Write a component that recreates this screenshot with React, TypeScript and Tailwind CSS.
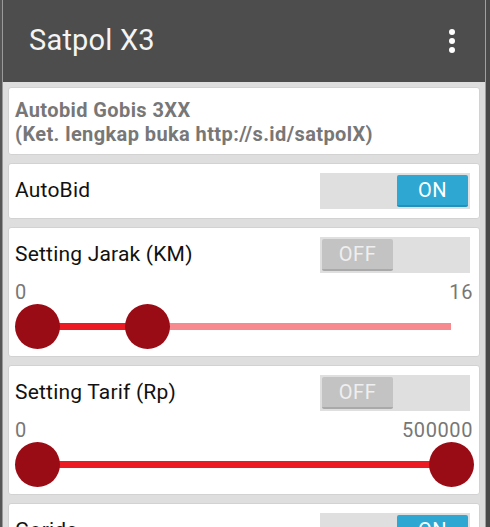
import React from 'react';

type ToggleProps = { on: boolean };

const Toggle: React.FC<ToggleProps> = ({ on }) => (
  <div className={`w-[150px] h-[36px] bg-[#dfdfdf] p-[2px] flex shrink-0 ${on ? 'justify-end' : 'justify-start'}`}>
    {on ? (
      <div className="w-[71px] h-[32px] bg-[#2ea7d3] border-b-[2px] border-[#2591bb] rounded-[2px] flex items-center justify-center text-white text-[20px] tracking-[0.5px] leading-none">
        ON
      </div>
    ) : (
      <div className="w-[71px] h-[32px] bg-[#c3c3c3] border-b-[2px] border-[#a9a9a9] rounded-[2px] flex items-center justify-center text-[#efefef] text-[20px] tracking-[0.5px] leading-none">
        OFF
      </div>
    )}
  </div>
);

type RangeProps = { min: number; max: number; low: number; high: number };

// Two thumb range slider, thumbs sit over the track
const RangeSlider: React.FC<RangeProps> = ({ min, max, low, high }) => {
  const lo = (low - min) / (max - min);
  const hi = (high - min) / (max - min);
  return (
    <div className="relative h-[45px] mt-[1px]">
      <div className="absolute left-[22px] right-[22px] top-[19px] h-[7px]">
        <div className="absolute inset-0 bg-[#f68a8f]" />
        <div
          className="absolute top-0 bottom-0 bg-[#ec1a23]"
          style={{ left: `${lo * 100}%`, right: `${(1 - hi) * 100}%` }}
        />
        <div
          className="absolute top-[-19px] w-[45px] h-[45px] -ml-[22px] rounded-full bg-[#9a0c15]"
          style={{ left: `${lo * 100}%` }}
        />
        <div
          className="absolute top-[-19px] w-[45px] h-[45px] -ml-[22px] rounded-full bg-[#9a0c15]"
          style={{ left: `${hi * 100}%` }}
        />
      </div>
    </div>
  );
};

type SliderCardProps = {
  title: string;
  on: boolean;
  min: number;
  max: number;
  low: number;
  high: number;
};

const SliderCard: React.FC<SliderCardProps> = ({ title, on, min, max, low, high }) => (
  <div className="bg-white border border-[#d2d2d2] rounded-[3px] pt-[9px] pb-[7px] pl-[6px] pr-[6px]">
    <div className="flex items-center justify-between h-[36px] pr-[3px]">
      <span className="text-[21px] tracking-[0.2px] text-[#111]">{title}</span>
      <Toggle on={on} />
    </div>
    <div className="mt-[8px] h-[22px] leading-[22px] flex justify-between text-[20px] tracking-[0.6px] text-[#777]">
      <span>{min}</span>
      <span>{max}</span>
    </div>
    <RangeSlider min={min} max={max} low={low} high={high} />
  </div>
);

export default function App() {
  return (
    <div
      className="w-[490px] h-[527px] overflow-hidden flex bg-[#4f4f4f]"
      style={{ fontFamily: 'Roboto, "Noto Sans", sans-serif' }}
    >
      {/* window frame left */}
      <div className="w-[2px] bg-[#565656]" />
      <div className="w-[1px] bg-[#9a9a9a]" />

      <div className="w-[482px] flex flex-col">
        {/* action bar */}
        <div className="h-[82px] shrink-0 bg-[#4d4d4d] flex items-center justify-between pl-[26px] pr-[30px]">
          <span className="text-[29px] tracking-[0.2px] text-[#f4f4f4]">Satpol X3</span>
          <div className="flex flex-col gap-[3px]">
            <div className="w-[6px] h-[6px] rounded-full bg-white" />
            <div className="w-[6px] h-[6px] rounded-full bg-white" />
            <div className="w-[6px] h-[6px] rounded-full bg-white" />
          </div>
        </div>

        <div className="flex-1 bg-[#dedede] px-[5px] pt-[5px] flex flex-col gap-[8px]">
          <div className="bg-white border border-[#d2d2d2] rounded-[3px] pt-[10px] pb-[8px] pl-[6px] text-[20px] tracking-[0.4px] leading-[24px] font-bold text-[#777]">
            <div>Autobid Gobis 3XX</div>
            <div>(Ket. lengkap buka http://s.id/satpolX)</div>
          </div>

          <div className="bg-white border border-[#d2d2d2] rounded-[3px] py-[9px] pl-[6px] pr-[9px] flex items-center justify-between">
            <span className="text-[21px] tracking-[0.2px] text-[#111]">AutoBid</span>
            <Toggle on={true} />
          </div>

          <SliderCard title="Setting Jarak (KM)" on={false} min={0} max={16} low={0} high={4.26} />
          <SliderCard title="Setting Tarif (Rp)" on={false} min={0} max={500000} low={0} high={500000} />

          <div className="bg-white border border-[#d2d2d2] rounded-[3px] py-[9px] pl-[6px] pr-[9px] flex items-center justify-between">
            <span className="text-[21px] tracking-[0.2px] text-[#111]">Goride</span>
            <Toggle on={true} />
          </div>
        </div>
      </div>

      {/* window frame right */}
      <div className="w-[1px] bg-[#a0a0a0]" />
      <div className="w-[4px] bg-[#4a4a4a]" />
    </div>
  );
}
